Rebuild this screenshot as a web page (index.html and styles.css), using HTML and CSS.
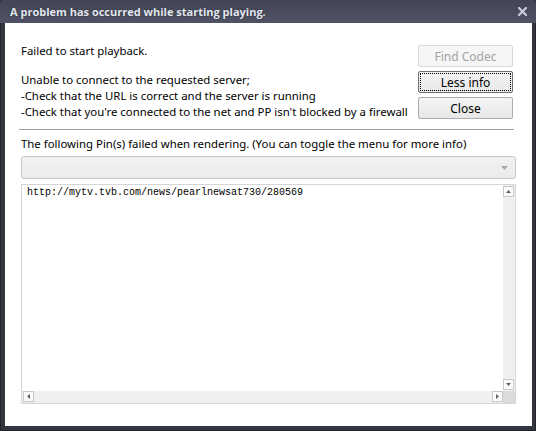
FILE: index.html
```html
<!DOCTYPE html>
<html>
<head>
<meta charset="utf-8">
<link rel="stylesheet" href="styles.css">
</head>
<body>
<div class="window">
  <div class="titlebar">
    <span class="title">A problem has occurred while starting playing.</span>
    <span class="close-x">
      <svg width="9" height="9" viewBox="0 0 9 9"><path d="M1 1 L8 8 M8 1 L1 8" stroke="#c9cdd8" stroke-width="2.2" stroke-linecap="square"/></svg>
    </span>
  </div>
  <div class="content">
    <div class="top">
      <div class="messages">
        <p class="msg">Failed to start playback.</p>
        <p class="msg detail">Unable to connect to the requested server;<br>-Check that the URL is correct and the server is running<br>-Check that you're connected to the net and PP isn't blocked by a firewall</p>
      </div>
      <div class="buttons">
        <div class="btn disabled">Find Codec</div>
        <div class="btn focused"><span class="focus-rect">Less info</span></div>
        <div class="btn">Close</div>
      </div>
    </div>
    <div class="separator"></div>
    <div class="label">The following Pin(s) failed when rendering. (You can toggle the menu for more info)</div>
    <div class="combo">
      <svg class="combo-arrow" width="7" height="4" viewBox="0 0 7 4"><path d="M0 0 H7 L3.5 4 Z" fill="#a8a8a8"/></svg>
    </div>
    <div class="log">
      <div class="log-text">http://mytv.tvb.com/news/pearlnewsat730/280569</div>
      <div class="vscroll">
        <div class="sbtn"><svg width="5" height="3" viewBox="0 0 5 3"><path d="M0 3 H5 L2.5 0 Z" fill="#606060"/></svg></div>
        <div class="track"></div>
        <div class="sbtn"><svg width="5" height="3" viewBox="0 0 5 3"><path d="M0 0 H5 L2.5 3 Z" fill="#606060"/></svg></div>
      </div>
      <div class="hscroll">
        <div class="sbtn"><svg width="3" height="5" viewBox="0 0 3 5"><path d="M3 0 V5 L0 2.5 Z" fill="#606060"/></svg></div>
        <div class="track"></div>
        <div class="sbtn"><svg width="3" height="5" viewBox="0 0 3 5"><path d="M0 0 V5 L3 2.5 Z" fill="#606060"/></svg></div>
      </div>
      <div class="corner"></div>
    </div>
  </div>
</div>
</body>
</html>
```

FILE: styles.css
```css
html, body {
  margin: 0;
  padding: 0;
  background: #2c2e36;
}
.window {
  width: 536px;
  height: 431px;
  box-sizing: border-box;
  background: #34363f;
  padding: 0 4px 5px 5px;
  display: flex;
  flex-direction: column;
  border-radius: 3px 3px 0 0;
  box-shadow: inset 0 0 0 1px #22242a;
}
.titlebar {
  height: 23px;
  flex: none;
  display: flex;
  align-items: center;
  justify-content: space-between;
  margin: 0 -4px 0 -5px;
  padding-left: 10px;
  padding-right: 9px;
  background: linear-gradient(#424554, #505364);
  border-radius: 3px 3px 0 0;
}
.title {
  font-family: "Open Sans", "Noto Sans", sans-serif;
  font-weight: bold;
  font-size: 11px;
  color: #e2e6f0;
  text-shadow: 0 0 2px #2a2c35;
}
.close-x {
  display: flex;
  margin-top: -1px;
}
.content {
  flex: 1;
  background: #ffffff;
  padding: 20px 16px 22px 16px;
  display: flex;
  flex-direction: column;
  font-family: "Noto Sans", "Open Sans", sans-serif;
  font-size: 11.4px;
  color: #000;
}
.top {
  display: flex;
  justify-content: space-between;
  padding-right: 3px;
}
.msg {
  margin: 0;
  line-height: 16px;
}
.detail {
  margin-top: 13px;
}
.buttons {
  display: flex;
  flex-direction: column;
  gap: 4px;
  margin-top: 2px;
}
.btn {
  width: 95px;
  height: 22px;
  box-sizing: border-box;
  border: 1px solid #acacac;
  border-radius: 2px;
  background: linear-gradient(#f4f4f4, #e8e8e8);
  display: flex;
  align-items: center;
  justify-content: center;
  font-size: 12px;
  color: #000;
}
.btn.disabled {
  border-color: #d9d9d9;
  background: #f6f6f6;
  color: #a3a3a3;
}
.btn.focused {
  border-color: #707070;
  padding: 1px;
}
.focus-rect {
  flex: 1;
  align-self: stretch;
  display: flex;
  align-items: center;
  justify-content: center;
  border: 1px dotted #000;
}
.separator {
  height: 1px;
  background: #a0a0a0;
  margin: 9px 2px 0 -2px;
}
.label {
  line-height: 16px;
  margin-top: 6px;
}
.combo {
  margin-top: 4px;
  height: 23px;
  box-sizing: border-box;
  border: 1px solid #c6c6c6;
  border-radius: 3px;
  background: linear-gradient(#f2f2f2, #ebebeb);
  display: flex;
  align-items: center;
  justify-content: flex-end;
  padding-right: 7px;
}
.log {
  margin-top: 5px;
  flex: 1;
  border: 1px solid #d6d6d6;
  display: grid;
  grid-template-columns: 1fr 12px;
  grid-template-rows: 1fr 12px;
}
.log-text {
  font-family: "Liberation Mono", monospace;
  font-size: 10px;
  line-height: 12px;
  padding: 2px 5px;
  color: #000;
}
.vscroll {
  background: #f0f0f0;
  display: flex;
  flex-direction: column;
  padding: 1px 1px 1px 0;
}
.hscroll {
  background: #f0f0f0;
  display: flex;
  flex-direction: row;
  padding: 0 0 1px 1px;
}
.track {
  flex: 1;
}
.sbtn {
  width: 11px;
  height: 11px;
  box-sizing: border-box;
  border: 1px solid #c8c8c8;
  background: #fbfbfb;
  display: flex;
  align-items: center;
  justify-content: center;
}
.corner {
  background: #dcdcdc;
}
```
